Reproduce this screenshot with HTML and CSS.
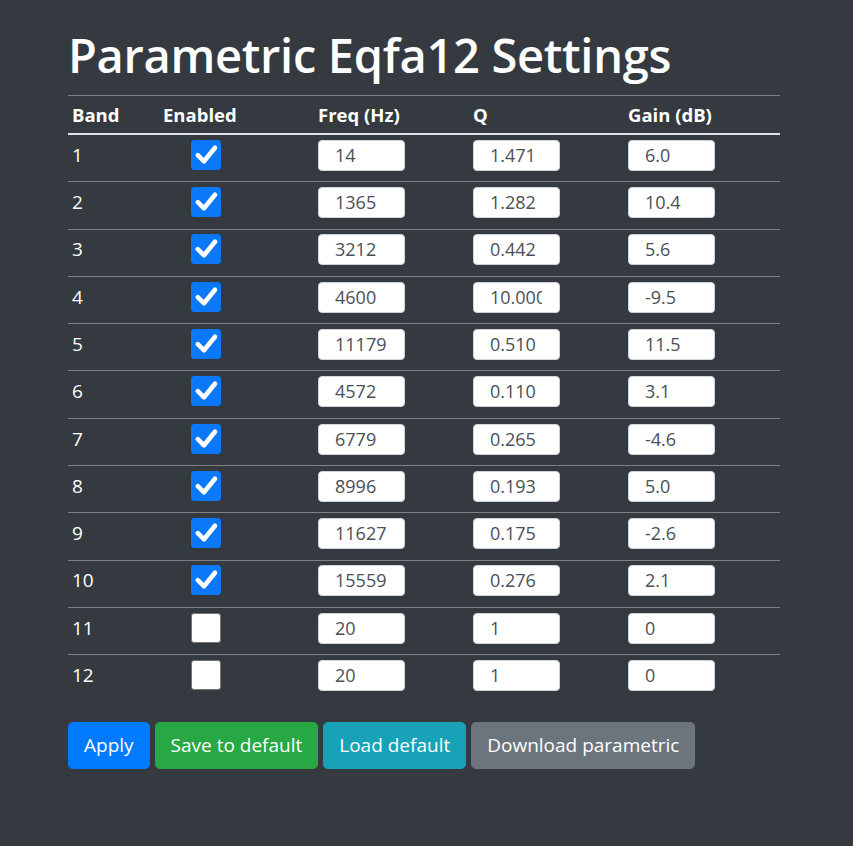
FILE: index.html
```html
<!DOCTYPE html>
<html lang="en">
<head>
<meta charset="utf-8">
<title>Parametric Eqfa12 Settings</title>
<link rel="stylesheet" href="styles.css">
</head>
<body>
<div class="page">
  <h1 class="title">Parametric Eqfa12 Settings</h1>
  <table class="eq-table">
    <colgroup>
      <col class="c-band"><col class="c-en"><col class="c-f"><col class="c-q"><col class="c-g">
    </colgroup>
    <thead>
      <tr><th>Band</th><th>Enabled</th><th>Freq (Hz)</th><th>Q</th><th>Gain (dB)</th></tr>
    </thead>
    <tbody>
      <tr><td>1</td><td><span class="chk on"><svg viewBox="0 0 30 30"><path d="M6.8 15.2 L13 21.3 L24 7.8"/></svg></span></td><td><span class="inp"><span class="val">14</span></span></td><td><span class="inp"><span class="val">1.471</span></span></td><td><span class="inp"><span class="val">6.0</span></span></td></tr>
      <tr><td>2</td><td><span class="chk on"><svg viewBox="0 0 30 30"><path d="M6.8 15.2 L13 21.3 L24 7.8"/></svg></span></td><td><span class="inp"><span class="val">1365</span></span></td><td><span class="inp"><span class="val">1.282</span></span></td><td><span class="inp"><span class="val">10.4</span></span></td></tr>
      <tr><td>3</td><td><span class="chk on"><svg viewBox="0 0 30 30"><path d="M6.8 15.2 L13 21.3 L24 7.8"/></svg></span></td><td><span class="inp"><span class="val">3212</span></span></td><td><span class="inp"><span class="val">0.442</span></span></td><td><span class="inp"><span class="val">5.6</span></span></td></tr>
      <tr><td>4</td><td><span class="chk on"><svg viewBox="0 0 30 30"><path d="M6.8 15.2 L13 21.3 L24 7.8"/></svg></span></td><td><span class="inp"><span class="val">4600</span></span></td><td><span class="inp"><span class="val">10.000</span></span></td><td><span class="inp"><span class="val">-9.5</span></span></td></tr>
      <tr><td>5</td><td><span class="chk on"><svg viewBox="0 0 30 30"><path d="M6.8 15.2 L13 21.3 L24 7.8"/></svg></span></td><td><span class="inp"><span class="val">11179</span></span></td><td><span class="inp"><span class="val">0.510</span></span></td><td><span class="inp"><span class="val">11.5</span></span></td></tr>
      <tr><td>6</td><td><span class="chk on"><svg viewBox="0 0 30 30"><path d="M6.8 15.2 L13 21.3 L24 7.8"/></svg></span></td><td><span class="inp"><span class="val">4572</span></span></td><td><span class="inp"><span class="val">0.110</span></span></td><td><span class="inp"><span class="val">3.1</span></span></td></tr>
      <tr><td>7</td><td><span class="chk on"><svg viewBox="0 0 30 30"><path d="M6.8 15.2 L13 21.3 L24 7.8"/></svg></span></td><td><span class="inp"><span class="val">6779</span></span></td><td><span class="inp"><span class="val">0.265</span></span></td><td><span class="inp"><span class="val">-4.6</span></span></td></tr>
      <tr><td>8</td><td><span class="chk on"><svg viewBox="0 0 30 30"><path d="M6.8 15.2 L13 21.3 L24 7.8"/></svg></span></td><td><span class="inp"><span class="val">8996</span></span></td><td><span class="inp"><span class="val">0.193</span></span></td><td><span class="inp"><span class="val">5.0</span></span></td></tr>
      <tr><td>9</td><td><span class="chk on"><svg viewBox="0 0 30 30"><path d="M6.8 15.2 L13 21.3 L24 7.8"/></svg></span></td><td><span class="inp"><span class="val">11627</span></span></td><td><span class="inp"><span class="val">0.175</span></span></td><td><span class="inp"><span class="val">-2.6</span></span></td></tr>
      <tr><td>10</td><td><span class="chk on"><svg viewBox="0 0 30 30"><path d="M6.8 15.2 L13 21.3 L24 7.8"/></svg></span></td><td><span class="inp"><span class="val">15559</span></span></td><td><span class="inp"><span class="val">0.276</span></span></td><td><span class="inp"><span class="val">2.1</span></span></td></tr>
      <tr><td>11</td><td><span class="chk"></span></td><td><span class="inp"><span class="val">20</span></span></td><td><span class="inp"><span class="val">1</span></span></td><td><span class="inp"><span class="val">0</span></span></td></tr>
      <tr><td>12</td><td><span class="chk"></span></td><td><span class="inp"><span class="val">20</span></span></td><td><span class="inp"><span class="val">1</span></span></td><td><span class="inp"><span class="val">0</span></span></td></tr>
    </tbody>
  </table>
  <div class="actions">
    <button class="btn btn-primary">Apply</button>
    <button class="btn btn-success">Save to default</button>
    <button class="btn btn-info">Load default</button>
    <button class="btn btn-secondary">Download parametric</button>
  </div>
</div>
</body>
</html>
```

FILE: styles.css
```css
html, body {
  margin: 0;
  padding: 0;
  background: #343a40;
  height: 100%;
}
body {
  font-family: "Open Sans", "Noto Sans", sans-serif;
  color: #fff;
  font-size: 19px;
}
.page {
  padding: 23px 73px 0 68px;
}
.title {
  margin: 0 0 8px 0;
  font-size: 47px;
  font-weight: 600;
  line-height: 64px;
  letter-spacing: -0.3px;
}
.eq-table {
  width: 712px;
  border-collapse: collapse;
  table-layout: fixed;
}
.c-band { width: 91px; }
.c-en { width: 155px; }
.c-f { width: 155px; }
.c-q { width: 155px; }
.c-g { width: 156px; }
.eq-table th {
  text-align: left;
  font-weight: 700;
  font-size: 18.5px;
  padding: 4.8px 4px;
  line-height: 27.4px;
  border-top: 1px solid #7d8185;
  border-bottom: 2px solid #dee2e6;
}
.eq-table td {
  padding: 4.8px 4px 10.5px;
  line-height: 31px;
  height: 31px;
  vertical-align: top;
  border-top: 1px solid #7d8185;
}
.eq-table tbody tr:first-child td {
  border-top: none;
}
.chk {
  display: inline-block;
  vertical-align: top;
  box-sizing: border-box;
  width: 30px;
  height: 30px;
  margin-left: 28px;
  border-radius: 3px;
  background: #fff;
  border: 1px solid #767676;
}
.chk.on {
  background: #0a78f8;
  border-color: #0a78f8;
}
.chk svg {
  display: block;
  width: 30px;
  height: 30px;
  margin: -1px;
  fill: none;
  stroke: #fff;
  stroke-width: 4.6;
  stroke-linecap: round;
  stroke-linejoin: round;
}
.inp {
  display: inline-block;
  vertical-align: top;
  box-sizing: border-box;
  width: 87px;
  height: 31px;
  padding: 0 17px 0 16px;
  background: #fff;
  border: 1px solid #ced4da;
  border-radius: 4px;
  color: #495057;
  font-size: 18px;
  line-height: 29px;
}
.val {
  display: block;
  overflow: hidden;
  white-space: nowrap;
}
.actions {
  display: flex;
  gap: 5px;
  margin-top: 20px;
}
.btn {
  font-family: inherit;
  font-size: 19px;
  line-height: 29px;
  padding: 8px 15px;
  border: 1px solid transparent;
  border-radius: 4.8px;
  color: #fff;
  cursor: pointer;
}
.btn-primary { background: #007bff; border-color: #007bff; }
.btn-success { background: #28a745; border-color: #28a745; }
.btn-info { background: #17a2b8; border-color: #17a2b8; }
.btn-secondary { background: #6c757d; border-color: #6c757d; }
```
